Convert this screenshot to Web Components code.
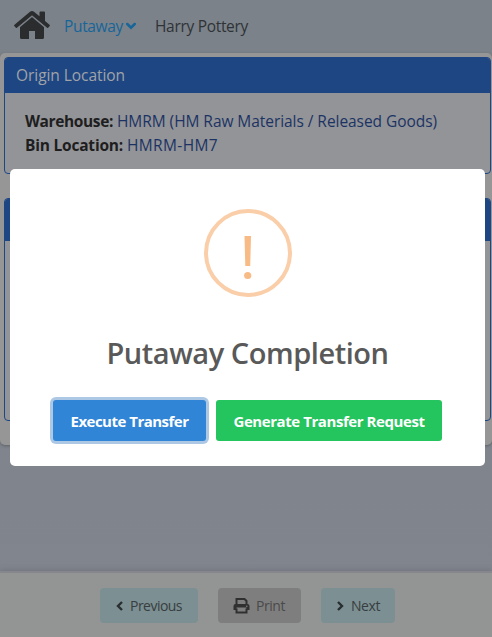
<!DOCTYPE html>
<html lang="en"><head><meta charset="utf-8"><title>Putaway</title>
<style>
html,body{margin:0;height:637px;overflow:hidden}
body{font:16px/24px "Open Sans","Noto Sans",sans-serif}
</style></head><body><putaway-app></putaway-app>
<script>
const define=(name,html,setup)=>customElements.define(name,class extends HTMLElement{
  connectedCallback(){
    if(this.shadowRoot)return;
    this.attachShadow({mode:'open'}).innerHTML=html;
    if(setup)setup(this,this.shadowRoot);
  }
});

// Text label that tracks its letters to occupy the width given in "w".
define('fit-text','<style>:host{display:inline-block;white-space:nowrap;flex:none}span{display:inline-block}</style><span><slot></slot></span>',(host,root)=>{
  const s=root.querySelector('span'),w=+host.getAttribute('w');
  host.style.width=w+'px';
  s.style.letterSpacing=((w-s.getBoundingClientRect().width)/host.textContent.length)+'px';
});

define('nav-bar',`<style>
:host{display:flex;height:53px;box-sizing:border-box;padding:0 0 3px 14px;align-items:center;background:#7b828a;color:#303336;font-size:15.5px}
fit-text{padding-top:1px}
.home{width:36px;height:30px;margin-right:14px}.chev{width:10px;height:8px;margin:1px 19px 0 3px}
.on{color:#176599}</style>
<svg class="home" viewBox="0 0 36 30"><path fill="#2b2c2e" d="M6 16 18 6 30 16v11.5q0 1.5-1.5 1.5H21v-8h-6v8H7.500q-1.500 0-1.500-1.500z"/><path fill="#2b2c2e" d="M.5 14.700 16 1.700q2-1.600 4 0L25.500 6.300V2.500q0-1 1-1H30q1 0 1 1v8.500l4.500 3.700q.8.700.2 1.400l-1.300 1.500q-.7.700-1.400.1L18 5.400 3 17.700q-.7.600-1.400-.1L.3 16.100q-.6-.7.200-1.400z"/><path fill="none" stroke="#7b828a" stroke-width="1.300" d="m4 17.900 14-11.600 14 11.600"/></svg>
<fit-text class="on" w="59">Putaway</fit-text>
<svg class="chev" viewBox="0 0 10 8"><path d="m1.300 2 3.700 3.700L8.700 2" fill="none" stroke="#176599" stroke-width="2.500" stroke-linecap="round"/></svg>
<fit-text w="93">Harry Pottery</fit-text>`);

define('info-card',`<style>
:host{display:flex;flex-direction:column;box-sizing:border-box;border:1px solid #1e4683;border-radius:4px;overflow:hidden;background:#939497}
header{height:var(--head);flex:none;box-sizing:border-box;background:#1e4683;color:#a0a3a8;padding:5px 11px;font-size:15.5px}
section{padding:16px 20px}</style>
<header><slot name="title"></slot></header><section><slot></slot></section>`);

define('info-row',`<style>:host{display:flex;gap:4px;height:24px;color:#1b3364;font-size:15.5px}
::slotted([slot=label]){font-weight:700;color:#1e1e1f}</style><slot name="label"></slot><slot></slot>`);

define('foot-button',`<style>:host{display:flex;box-sizing:border-box;height:35px;align-items:center;border-radius:4px;background:#7c8f92;color:#373e40;font-size:14px}
:host([muted]){background:#7e7e7e;color:#4a4a4a}</style><slot></slot>`);

define('foot-bar',`<style>
:host{display:flex;box-sizing:border-box;height:66px;padding:15px 0 0 100px;gap:20px;background:#939594;border-top:2px solid #85878d;box-shadow:0 -1px 4px #62666b80}
svg{flex:none}
.p{width:98px;padding-left:15px}.m{width:83px;padding-left:15px}.n{width:74px;padding-left:15px}
.p,.m,.n{box-sizing:border-box}</style>
<foot-button class="p"><svg width="9" height="12" style="margin-right:6px"><path d="M7 2 3 6l4 4" fill="none" stroke="#292e30" stroke-width="2.400"/></svg><fit-text w="52">Previous</fit-text></foot-button>
<foot-button class="m" muted><svg width="17" height="17" viewBox="0 0 17 17" style="margin-right:6px"><path fill="none" stroke="#303030" stroke-width="2" d="M3.500 7V2h8l2 2v3M3.500 11.500v4h10v-4"/><path fill="#303030" d="M2.500 7h12q2 0 2 2v4h-3v-2.500h-10V13h-3V9q0-2 2-2z"/><circle cx="13.800" cy="9.200" r=".8" fill="#7e7e7e"/></svg><fit-text w="29">Print</fit-text></foot-button>
<foot-button class="n"><svg width="9" height="12" style="margin-right:6px"><path d="m2 2 4 4-4 4" fill="none" stroke="#292e30" stroke-width="2.400"/></svg><fit-text w="29">Next</fit-text></foot-button>`);

define('action-button',`<style>:host{display:flex;box-sizing:border-box;height:41px;align-items:center;justify-content:center;border-radius:3px;background:#24c45e;color:#fff;font-size:15px;font-weight:700}
:host([focused]){background:#3085d6;box-shadow:0 0 0 3px #adc8e5}</style><slot></slot>`);

define('alert-dialog',`<style>
:host{display:flex;flex-direction:column;align-items:center;box-sizing:border-box;width:475px;height:297px;padding-top:40px;border-radius:5px;background:#fff}
svg{flex:none}
.t{font-size:29px;line-height:40px;font-weight:600;color:#595959;margin:36px 0 27px}
.b{display:flex;gap:10px;width:389px}</style>
<svg width="88" height="88"><circle cx="44" cy="44" r="42" fill="none" stroke="#facea8" stroke-width="4"/><path fill="#f8bb86" d="M40.500 27h6.500l-.8 30h-4.900z"/><circle cx="43.700" cy="66.500" r="3.600" fill="#f8bb86"/></svg>
<fit-text class="t" w="282">Putaway Completion</fit-text>
<div class="b"><action-button focused style="width:153px"><fit-text w="118">Execute Transfer</fit-text></action-button><action-button style="width:226px"><fit-text w="191">Generate Transfer Request</fit-text></action-button></div>`);

define('putaway-app',`<style>
:host{display:flex;flex-direction:column;position:relative;width:492px;height:637px;background:linear-gradient(#7b828a,#81858e)}
main{box-sizing:border-box;height:392px;padding:4px 1px 24px 4px;background:#969696;border-radius:5px;box-shadow:0 1px 3px #5e6266;display:flex;flex-direction:column;gap:24px}
nav-bar{flex:none}
.a{height:117px;--head:35px}.z{height:223px;--head:42px}
foot-bar{margin-top:auto}
alert-dialog{position:absolute;left:10px;top:169px}</style>
<nav-bar></nav-bar>
<main><info-card class="a"><fit-text slot="title" w="109">Origin Location</fit-text>
<info-row><fit-text slot="label" w="88">Warehouse:</fit-text><fit-text w="320">HMRM (HM Raw Materials / Released Goods)</fit-text></info-row>
<info-row><fit-text slot="label" w="98">Bin Location:</fit-text><fit-text w="91">HMRM-HM7</fit-text></info-row></info-card>
<info-card class="z"></info-card></main>
<foot-bar></foot-bar><alert-dialog></alert-dialog>`);
</script></body></html>
